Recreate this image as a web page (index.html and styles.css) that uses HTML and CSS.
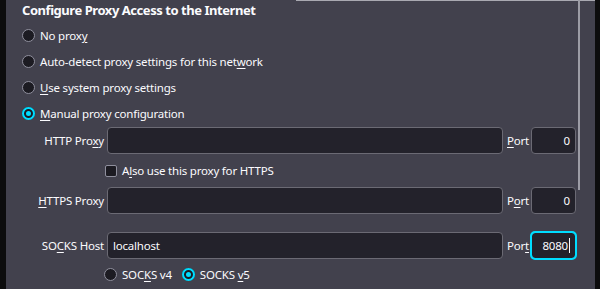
FILE: index.html
```html
<!DOCTYPE html>
<html>
<head>
<meta charset="utf-8">
<link rel="stylesheet" href="styles.css">
</head>
<body>
<div class="page">
  <div class="edge-left"></div>
  <div class="dialog">
    <div class="topline"></div>
    <div class="title">Configure Proxy Access to the Internet</div>
    <div class="opt"><span class="radio"></span><span>No prox<u>y</u></span></div>
    <div class="opt"><span class="radio"></span><span>Auto-detect proxy settings for this net<u>w</u>ork</span></div>
    <div class="opt"><span class="radio"></span><span><u>U</u>se system proxy settings</span></div>
    <div class="opt"><span class="radio on"></span><span><u>M</u>anual proxy configuration</span></div>
    <div class="grid">
      <div class="lbl r1">HTTP Pro<u>x</u>y</div>
      <div class="input c2 r1"></div>
      <div class="plbl r1"><u>P</u>ort</div>
      <div class="input port r1">0</div>

      <div class="check-row"><span class="check"></span><span>A<u>l</u>so use this proxy for HTTPS</span></div>

      <div class="lbl r3"><u>H</u>TTPS Proxy</div>
      <div class="input c2 r3"></div>
      <div class="plbl r3">P<u>o</u>rt</div>
      <div class="input port r3">0</div>

      <div class="lbl r5">SO<u>C</u>KS Host</div>
      <div class="input c2 r5">localhost</div>
      <div class="plbl r5">Por<u>t</u></div>
      <div class="input port r5 focus">8080<span class="caret"></span></div>

      <div class="ver-row">
        <span class="ver"><span class="radio"></span><span>SOC<u>K</u>S v4</span></span>
        <span class="ver"><span class="radio on"></span><span>SOCKS <u>v</u>5</span></span>
      </div>
    </div>
    <div class="scroll"></div>
  </div>
  <div class="edge-right"></div>
</div>
</body>
</html>
```
FILE: styles.css
```css
html, body {
  margin: 0;
  padding: 0;
  background: #42414d;
}
body {
  font-family: "Noto Sans", "Open Sans", sans-serif;
  font-size: 11.5px;
  letter-spacing: -0.2px;
  color: #fbfbfe;
}
u {
  text-decoration: underline;
  text-underline-offset: 2px;
  text-decoration-thickness: 1px;
}
.page {
  display: flex;
  width: 600px;
  height: 289px;
  overflow: hidden;
}
.edge-left {
  width: 6px;
  background: #0c0c0d;
}
.edge-right {
  width: 5px;
  background: #0c0c0d;
}
.dialog {
  flex: 1;
  position: relative;
  padding-left: 16px;
  background: #42414d;
}
.topline {
  position: absolute;
  top: 0;
  left: 290px;
  right: 0;
  height: 1px;
  background: #a9a9b1;
}
.title {
  height: 22px;
  box-sizing: border-box;
  line-height: 20px;
  font-size: 13px;
  letter-spacing: -0.45px;
  font-weight: 700;
}
.opt {
  height: 26px;
  display: flex;
  align-items: center;
  gap: 5px;
}
.radio {
  width: 13px;
  height: 13px;
  box-sizing: border-box;
  border-radius: 50%;
  border: 1px solid #8f8f9d;
  background: #1c1b22;
  flex: none;
}
.radio.on {
  border: none;
  background: #00ddff;
  box-shadow: inset 0 0 0 2px #00ddff, inset 0 0 0 4px #1c1b22;
}
.grid {
  margin-top: 1px;
  display: grid;
  grid-template-columns: 85px 396px 28px 45px;
  grid-template-rows: 27px 33px 27px 18px 27px 29px;
  align-items: center;
}
.r1 { grid-row: 1; }
.r3 { grid-row: 3; }
.r5 { grid-row: 5; }
.c2 { grid-column: 2; }
.lbl {
  grid-column: 1;
  text-align: right;
  padding-right: 3px;
}
.plbl {
  grid-column: 3;
  padding-left: 4px;
}
.input {
  height: 27px;
  box-sizing: border-box;
  background: #23222b;
  border: 1px solid #6b6a74;
  border-radius: 4px;
  padding: 0 5px;
  line-height: 25px;
}
.input.port {
  grid-column: 4;
  text-align: right;
}
.input.focus {
  outline: 2px solid #00ddff;
  outline-offset: -1px;
  border-color: #00ddff;
}
.caret {
  display: inline-block;
  width: 1px;
  height: 15px;
  background: #fbfbfe;
  vertical-align: -3px;
  margin-left: 1px;
}
.check-row {
  grid-column: 2 / 5;
  grid-row: 2;
  display: flex;
  align-items: center;
  gap: 5px;
  margin-left: -2px;
}
.check {
  width: 12px;
  height: 12px;
  box-sizing: border-box;
  border: 1px solid #8f8f9d;
  background: #1c1b22;
  border-radius: 2px;
}
.ver-row {
  grid-column: 2 / 5;
  grid-row: 6;
  display: flex;
  align-items: center;
  gap: 10px;
  margin-left: -3px;
  padding-top: 1px;
}
.ver {
  display: flex;
  align-items: center;
  gap: 5px;
}
.scroll {
  position: absolute;
  top: 0;
  left: 572px;
  width: 2px;
  height: 190px;
  background: #9c9ca5;
}
```
